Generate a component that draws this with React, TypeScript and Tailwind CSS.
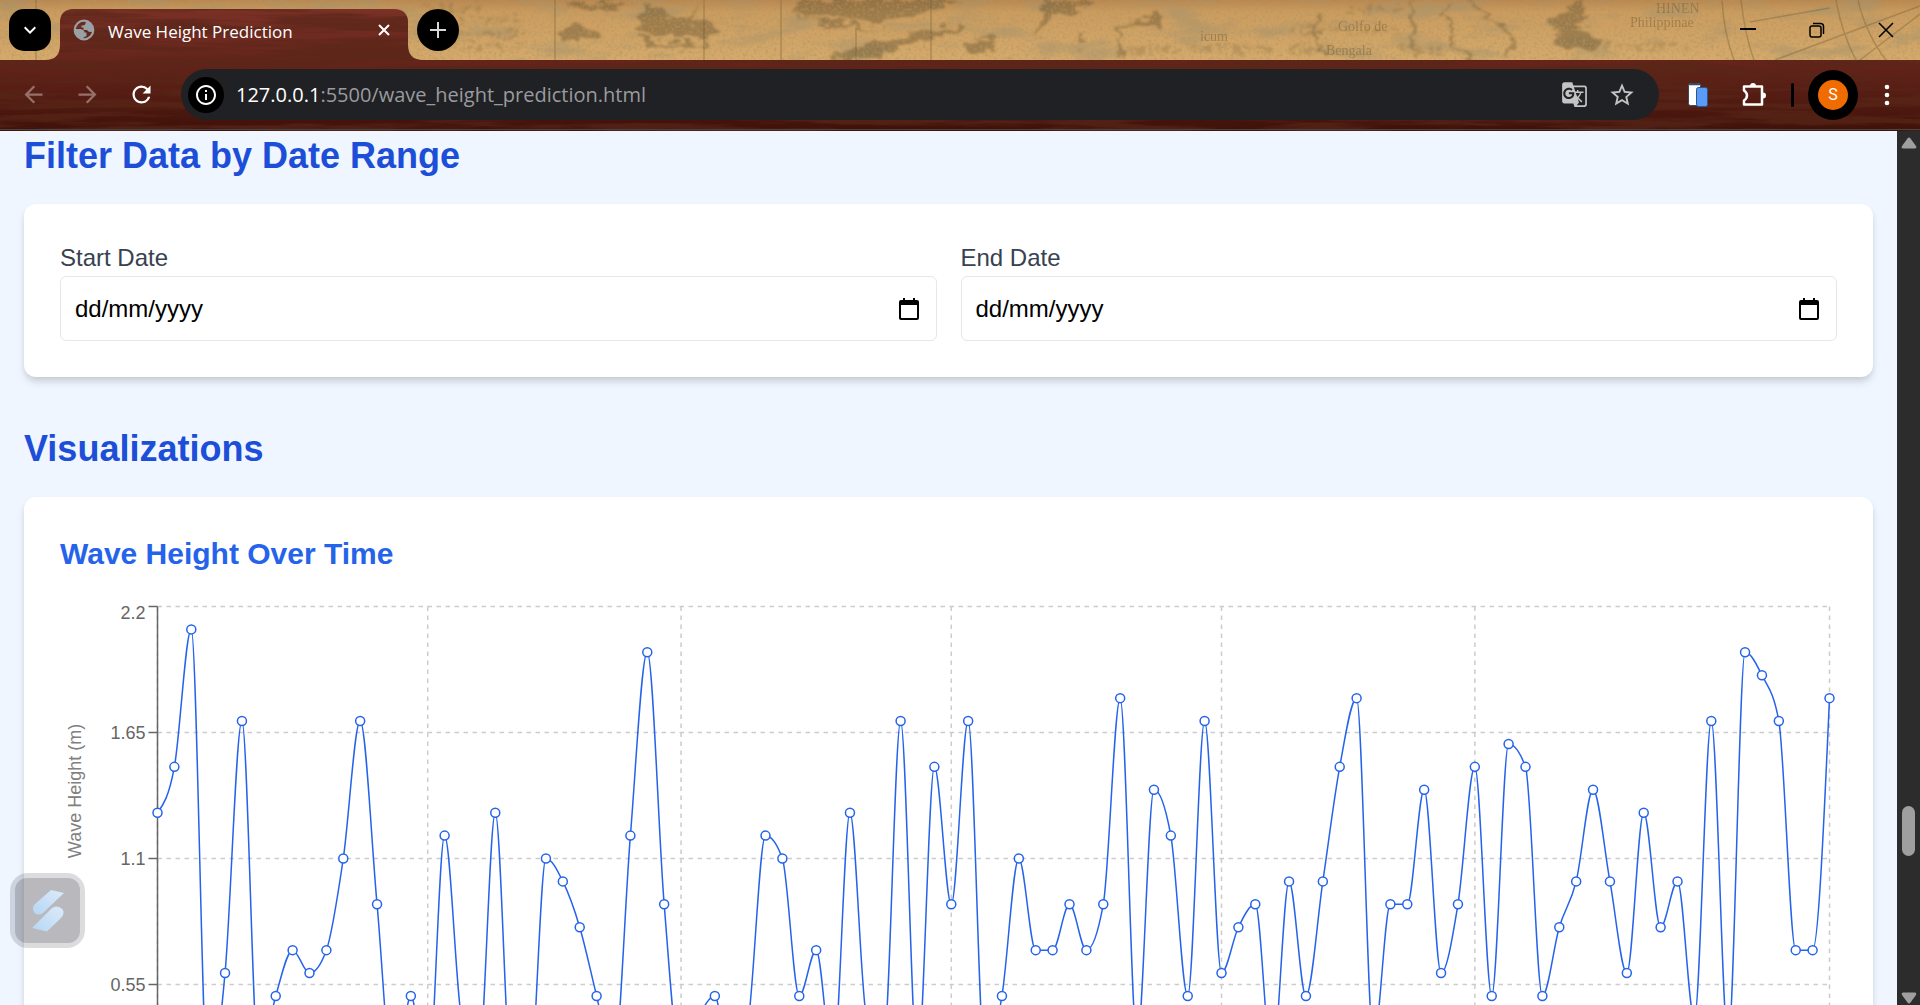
import { useLayoutEffect, useRef, useState } from "react";
import type { ReactNode } from "react";
import {
  MdArrowBack,
  MdArrowForward,
  MdGTranslate,
  MdInfoOutline,
  MdKeyboardArrowDown,
  MdRefresh,
  MdStarBorder,
} from "react-icons/md";

const WAVE_HEIGHTS = [
  1.3, 1.5, 2.1, 0.1, 0.6, 1.7, 0.2, 0.5, 0.7, 0.6, 0.7, 1.1, 1.7, 0.9, 0.1, 0.5, 0.1, 1.2, 0.4, 0.2,
  1.3, 0.1, 0.1, 1.1, 1.0, 0.8, 0.5, 0.2, 1.2, 2.0, 0.9, 0.2, 0.4, 0.5, 0.1, 0.4, 1.2, 1.1, 0.5, 0.7,
  0.2, 1.3, 0.4, 0.3, 1.7, 0.2, 1.5, 0.9, 1.7, 0.2, 0.5, 1.1, 0.7, 0.7, 0.9, 0.7, 0.9, 1.8, 0.3, 1.4,
  1.2, 0.5, 1.7, 0.6, 0.8, 0.9, 0.2, 1.0, 0.5, 1.0, 1.5, 1.8, 0.3, 0.9, 0.9, 1.4, 0.6, 0.9, 1.5, 0.5,
  1.6, 1.5, 0.5, 0.8, 1.0, 1.4, 1.0, 0.6, 1.3, 0.8, 1.0, 0.4, 1.7, 0.3, 2.0, 1.9, 1.7, 0.7, 0.7, 1.8,
];
const X_TICKS = [0, 16, 31, 47, 63, 78, 99];
const Y_TICKS = [0, 0.55, 1.1, 1.65, 2.2];

/** Monotone cubic path through the points, after Steffen. */
function monotonePath(pts: { x: number; y: number }[]) {
  const n = pts.length;
  const h = pts.slice(1).map((p, i) => p.x - pts[i].x);
  const s = pts.slice(1).map((p, i) => (p.y - pts[i].y) / h[i]);
  const m: number[] = new Array(n).fill(0);
  for (let i = 1; i < n - 1; i++) {
    const p = (s[i - 1] * h[i] + s[i] * h[i - 1]) / (h[i - 1] + h[i]);
    m[i] =
      (Math.sign(s[i - 1]) + Math.sign(s[i])) *
        Math.min(Math.abs(s[i - 1]), Math.abs(s[i]), 0.5 * Math.abs(p)) || 0;
  }
  m[0] = (3 * s[0] - m[1]) / 2;
  m[n - 1] = (3 * s[n - 2] - m[n - 2]) / 2;
  let d = `M${pts[0].x},${pts[0].y}`;
  for (let i = 0; i < n - 1; i++) {
    const k = h[i] / 3;
    d += `C${pts[i].x + k},${pts[i].y + k * m[i]},${pts[i + 1].x - k},${pts[i + 1].y - k * m[i + 1]},${pts[i + 1].x},${pts[i + 1].y}`;
  }
  return d;
}

function WaveChart() {
  const box = useRef<HTMLDivElement>(null);
  const [width, setWidth] = useState(1777);

  useLayoutEffect(() => {
    const el = box.current;
    if (!el) return;
    const measure = () => setWidth(el.clientWidth);
    measure();
    const observer = new ResizeObserver(measure);
    observer.observe(el);
    return () => observer.disconnect();
  }, []);

  // The drawing works in units of 1.5 screen pixels.
  const w = width / 1.5;
  const left = 65;
  const right = w - 5;
  const top = 5;
  const bottom = 341;
  const x = (i: number) => left + ((right - left) * i) / (WAVE_HEIGHTS.length - 1);
  const y = (v: number) => bottom - ((bottom - top) * v) / 2.2;
  const points = WAVE_HEIGHTS.map((v, i) => ({ x: x(i), y: y(v) }));

  return (
    <div ref={box} className="h-[600px] w-full">
      <svg
        viewBox={`0 0 ${w} 400`}
        className="block h-full w-full overflow-visible"
        role="img"
        aria-label="Wave Height Over Time"
      >
        <g stroke="#ccc" strokeDasharray="3 3">
          {Y_TICKS.map((v) => (
            <line key={v} x1={left} x2={right} y1={y(v)} y2={y(v)} />
          ))}
          {X_TICKS.map((i) => (
            <line key={i} x1={x(i)} x2={x(i)} y1={top} y2={bottom} />
          ))}
        </g>
        <g stroke="#666">
          <line x1={left} x2={left} y1={top} y2={bottom} />
          {Y_TICKS.map((v) => (
            <line key={v} x1={left - 6} x2={left} y1={y(v)} y2={y(v)} />
          ))}
        </g>
        <g fill="#666" fontSize="12" textAnchor="end">
          {Y_TICKS.map((v) => (
            <text key={v} x={left - 8} y={Math.max(y(v), 9) + 4}>
              {v}
            </text>
          ))}
        </g>
        <text fill="#808080" fontSize="12" textAnchor="middle" transform="translate(14 128) rotate(-90)">
          Wave Height (m)
        </text>
        <path d={monotonePath(points)} fill="none" stroke="#2563eb" />
        <g fill="#fff" stroke="#2563eb">
          {points.map((p, i) => (
            <circle key={i} cx={p.x} cy={p.y} r="3" />
          ))}
        </g>
      </svg>
    </div>
  );
}

/** Theme artwork: an old map behind the tabs, dark wood behind the toolbar. */
function ThemeArt() {
  return (
    <svg className="absolute inset-0 h-full w-full" aria-hidden="true">
      <defs>
        <linearGradient id="paper" x1="0" y1="0" x2="0" y2="1">
          <stop offset="0" stopColor="#b98750" />
          <stop offset="0.2" stopColor="#cb9c5f" />
          <stop offset="1" stopColor="#d5aa6c" />
        </linearGradient>
        <linearGradient id="wood" gradientUnits="userSpaceOnUse" x1="0" y1="9" x2="0" y2="131">
          <stop offset="0" stopColor="#7a3126" />
          <stop offset="0.42" stopColor="#65251b" />
          <stop offset="0.75" stopColor="#521b12" />
          <stop offset="1" stopColor="#3d1109" />
        </linearGradient>
        <filter id="grain" x="0" y="0" width="100%" height="100%">
          <feTurbulence type="fractalNoise" baseFrequency="0.007 0.12" numOctaves="5" seed="21" />
          <feColorMatrix values="0 0 0 0 0.1  0 0 0 0 0.02  0 0 0 0 0.01  5 0 0 0 -2" />
        </filter>
        <filter id="stain" x="0" y="0" width="100%" height="100%">
          <feTurbulence type="fractalNoise" baseFrequency="0.018 0.05" numOctaves="5" seed="11" />
          <feColorMatrix values="0 0 0 0 0.38  0 0 0 0 0.29  0 0 0 0 0.15  4 0 0 0 -2" />
        </filter>
        <filter id="speck" x="0" y="0" width="100%" height="100%">
          <feTurbulence type="fractalNoise" baseFrequency="0.35" numOctaves="3" seed="3" />
          <feColorMatrix values="0 0 0 0 0.45  0 0 0 0 0.3  0 0 0 0 0.12  2.2 0 0 0 -1" />
        </filter>
        <filter id="ink" x="-2%" y="-10%" width="104%" height="120%">
          <feTurbulence type="fractalNoise" baseFrequency="0.06 0.12" numOctaves="4" seed="4" result="n" />
          <feDisplacementMap in="SourceGraphic" in2="n" scale="20" xChannelSelector="R" yChannelSelector="G" />
          <feGaussianBlur stdDeviation="0.9" />
        </filter>
      </defs>
      <rect width="100%" height="60" fill="url(#paper)" />
      <rect width="100%" height="60" filter="url(#stain)" opacity="0.5" />
      <g fill="none" stroke="#7a6238" strokeWidth="1.5" opacity="0.45">
        <path d="M36 0V60M555 0V60M704 0V60M781 0V60M856 28V60M931 0V60M1722 0Q1724 34 1734 60M1741 0Q1745 36 1754 60M1775 60L1920 6M1836 0Q1842 34 1856 60M1858 0Q1866 34 1886 60M1860 60L1920 14M1750 22L1830 8" />
      </g>
      <svg width="100%" height="60">
        <g fill="#6f5a34" opacity="0.5" filter="url(#ink)">
          <path d="M642 4Q656 6 666 14Q680 22 690 18L700 4L692 22Q712 22 722 30Q716 38 690 38Q664 42 640 30Z" />
          <path d="M640 36Q672 48 704 42L702 46Q668 52 640 42Z" />
          <path d="M800 0H960L930 12Q880 24 846 20Q820 12 790 12Z" />
          <path d="M790 14Q840 22 868 28L894 28Q850 32 820 24Z" />
          <path d="M828 56Q880 46 900 34Q930 26 966 26Q950 36 916 42Q890 50 878 60H830Z" />
          <path d="M1044 0H1092Q1086 10 1060 12L1048 20Q1040 34 1034 34Q1044 16 1044 0Z" />
          <path d="M1082 30L1088 42L1080 48L1076 44Z" />
          <path d="M966 44Q980 36 998 44L994 52Q976 52 966 50Z" />
          <path d="M1126 24Q1150 18 1160 10Q1164 24 1150 28Q1136 30 1126 24Z" />
          <path d="M1552 16Q1570 8 1574 0H1584Q1586 16 1578 26Q1588 34 1604 40Q1596 50 1580 46Q1566 54 1558 44Q1550 40 1560 32Q1546 28 1552 16Z" />
          <path d="M584 2L560 6L600 12L640 2ZM560 30Q590 22 600 34Q580 42 560 38Z" />
          <path
            d="M430 20H520M440 34H530M450 46H524M1290 30H1400M1290 48H1330M1400 50H1440M1590 46H1690M1120 50H1180M1190 48H1270M1350 10H1400M420 8H480"
            stroke="#6f5a34"
            strokeWidth="5"
            strokeDasharray="5 4 3 3 8 5"
            opacity="0.5"
          />
          <path
            d="M1452 0Q1440 10 1448 20Q1458 30 1452 40Q1462 50 1470 60M1468 0Q1482 14 1500 24Q1520 36 1512 50Q1506 56 1508 60M1412 0Q1404 14 1416 28Q1408 44 1418 58M1130 18Q1114 26 1120 44Q1124 54 1118 60M1320 14Q1310 30 1322 56"
            fill="none"
            stroke="#6f5a34"
            strokeWidth="3"
          />
        </g>
      </svg>
      <g fill="#6f5a34" opacity="0.5" fontFamily="Liberation Serif, serif" fontSize="14">
        <text x="1200" y="41">icum</text>
        <text x="1338" y="31">Golfo de</text>
        <text x="1326" y="55">Bengala</text>
        <text x="1656" y="13">HINEN</text>
        <text x="1630" y="27">Philippinae</text>
      </g>
      <rect width="100%" height="60" filter="url(#speck)" opacity="0.7" />
      <path
        d="M0 60H45Q60 60 60 45V23Q60 9 74 9H394Q408 9 408 23V45Q408 60 423 60H8000V131H0Z"
        fill="url(#wood)"
      />
      <clipPath id="woodClip">
        <path d="M0 60H45Q60 60 60 45V23Q60 9 74 9H394Q408 9 408 23V45Q408 60 423 60H8000V131H0Z" />
      </clipPath>
      <g clipPath="url(#woodClip)">
        <rect width="100%" height="131" filter="url(#grain)" opacity="0.7" />
      </g>
      <rect y="129" width="100%" height="1" fill="#4a4442" />
    </svg>
  );
}

function ToolButton({ label, children }: { label: string; children: ReactNode }) {
  return (
    <button type="button" aria-label={label} className="grid h-[51px] w-[54px] shrink-0 place-items-center text-white">
      {children}
    </button>
  );
}

function WindowButton({ label, children }: { label: string; children: ReactNode }) {
  return (
    <button type="button" aria-label={label} className="grid h-[60px] w-[69px] place-items-center">
      <svg viewBox="0 0 16 16" className="size-4" fill="none" stroke="#000" strokeWidth="1.5">
        {children}
      </svg>
    </button>
  );
}

function BrowserChrome() {
  return (
    <header className="relative shrink-0 font-['Open_Sans',sans-serif]">
      <ThemeArt />
      <div className="relative flex h-[60px] items-start">
        <button
          type="button"
          aria-label="Search tabs"
          className="mt-[9px] ml-[9px] grid size-[42px] place-items-center rounded-[15px] bg-black text-white"
        >
          <MdKeyboardArrowDown className="size-6" />
        </button>
        <div className="mt-[9px] ml-[9px] flex h-[51px] w-[348px] items-start px-3">
          <svg viewBox="0 0 24 24" className="mt-[9px] size-6" fill="#9aa0a6" aria-hidden="true">
            <circle cx="12" cy="12" r="9.3" fill="none" stroke="#9aa0a6" strokeWidth="2.200" />
            <path d="M14 2.500Q21 5 21.500 12L19.500 14Q16 14.500 15 12H11.500V9.500H9.500V7.500Q13 7.500 13.500 5.500Z" />
            <path d="M2.500 11H8.500Q12.500 11.500 12.500 14.500H14.500V18L11.500 19.500V21.500Q3.500 20.500 2.500 11Z" />
          </svg>
          <span className="ml-3 grow pt-[11px] text-[17px] leading-6 text-white">Wave Height Prediction</span>
          <button type="button" aria-label="Close tab" className="mt-[9px] grid size-6 place-items-center">
            <svg viewBox="0 0 12 12" className="size-3" stroke="#fff" strokeWidth="2">
              <path d="M1 1L11 11M11 1L1 11" />
            </svg>
          </button>
        </div>
        <button
          type="button"
          aria-label="New tab"
          className="mt-[9px] ml-[9px] grid size-[42px] place-items-center rounded-full bg-black"
        >
          <svg viewBox="0 0 16 16" className="size-4" stroke="#d8d8d8" strokeWidth="2">
            <path d="M8 0V16M0 8H16" />
          </svg>
        </button>
        <div className="ml-auto flex">
          <WindowButton label="Minimize">
            <path d="M0 7H16" strokeWidth="2" />
          </WindowButton>
          <WindowButton label="Restore">
            <rect x="1" y="4" width="11" height="11" rx="2" />
            <path d="M4 1.5H11.5Q14.5 1.5 14.5 4.5V12" />
          </WindowButton>
          <WindowButton label="Close">
            <path d="M1 1L15 15M15 1L1 15" />
          </WindowButton>
        </div>
      </div>
      <div className="relative flex h-[71px] items-center pr-[6px] pb-[2px] pl-[6px]">
        <ToolButton label="Back">
          <MdArrowBack className="size-[27px] text-[#96706a]" />
        </ToolButton>
        <ToolButton label="Forward">
          <MdArrowForward className="size-[27px] text-[#96706a]" />
        </ToolButton>
        <ToolButton label="Reload">
          <MdRefresh className="size-[27px]" />
        </ToolButton>
        <div className="ml-[13px] flex h-[51px] min-w-0 flex-1 items-center rounded-full bg-[#202124] pr-[13px] pl-[7px]">
          <button
            type="button"
            aria-label="View site information"
            className="grid size-9 shrink-0 place-items-center rounded-full bg-black text-white"
          >
            <MdInfoOutline className="size-6" />
          </button>
          <p className="ml-3 min-w-0 grow truncate text-[20px] leading-7 text-[#9a9b9e]">
            <span className="text-white">127.0.0.1</span>:5500/wave_height_prediction.html
          </p>
          <button type="button" aria-label="Translate this page" className="grid size-12 place-items-center text-[#c4c4c4]">
            <MdGTranslate className="size-[27px]" />
          </button>
          <button type="button" aria-label="Bookmark this tab" className="grid size-12 place-items-center text-[#c4c4c4]">
            <MdStarBorder className="size-7" />
          </button>
        </div>
        <div className="ml-3">
          <ToolButton label="Page extension">
            <svg viewBox="0 0 20 24" className="h-6 w-5">
              <rect x="0.5" y="0.5" width="12" height="22" rx="2" fill="#fff" stroke="#3b4a63" />
              <path d="M1 1.5H13" stroke="#3b4a63" strokeWidth="1.5" />
              <rect x="8.5" y="4.500" width="11" height="19" rx="2" fill="#5a9bf8" stroke="#2c5592" />
            </svg>
          </ToolButton>
        </div>
        <div className="ml-[2px]">
          <ToolButton label="Extensions">
            <svg viewBox="0 0 26 26" className="size-[26px]">
              <path
                d="M3 4.500H21V22.500H3V18.500Q6 16.500 6 13.500Q6 10.500 3 8.500Z"
                fill="none"
                stroke="#fff"
                strokeWidth="2.500"
                strokeLinejoin="round"
              />
              <path d="M9 4A3 3 0 0 1 15 4ZM22 10.500A3 3 0 0 1 22 16.500Z" fill="#fff" />
            </svg>
          </ToolButton>
        </div>
        <span className="ml-[10px] h-6 w-[3px] rounded-full bg-black" />
        <button
          type="button"
          aria-label="Profile"
          className="ml-[14px] grid size-[50px] shrink-0 place-items-center rounded-full bg-black"
        >
          <span className="grid size-[30px] place-items-center rounded-full bg-[#f06c00] font-[Roboto,sans-serif] text-base text-white">
            S
          </span>
        </button>
        <div className="ml-[2px]">
          <ToolButton label="Menu">
            <svg viewBox="0 0 6 22" className="h-[22px] w-[6px]" fill="#fff">
              <circle cx="3" cy="3" r="2.300" />
              <circle cx="3" cy="11" r="2.300" />
              <circle cx="3" cy="19" r="2.300" />
            </svg>
          </ToolButton>
        </div>
      </div>
    </header>
  );
}

function DateField({ id, label }: { id: string; label: string }) {
  return (
    <div>
      <label htmlFor={id} className="block text-2xl leading-9 text-[#374151]">
        {label}
      </label>
      <div className="flex h-[65px] items-center rounded-md border border-[#e5e7eb] pr-[15px] pl-[14px]">
        <input
          id={id}
          type="text"
          placeholder="dd/mm/yyyy"
          className="min-w-0 flex-1 bg-transparent text-2xl text-black outline-none placeholder:text-black"
        />
        <button type="button" aria-label={`Pick ${label.toLowerCase()}`} className="grid size-6 place-items-center">
          <svg viewBox="0 0 20 22" className="h-[22px] w-5">
            <path
              d="M4 0H6V2H14V0H16V2H18Q20 2 20 4V20Q20 22 18 22H2Q0 22 0 20V4Q0 2 2 2H4ZM2 7V20H18V7Z"
              fill="#000"
            />
          </svg>
        </button>
      </div>
    </div>
  );
}

const CARD = "rounded-xl bg-white p-9 shadow-[0_6px_9px_-1px_rgba(0,0,0,0.12),0_3px_6px_-1px_rgba(0,0,0,0.08)]";
const HEADING = "mb-6 text-4xl leading-[48px] font-bold text-[#1d4ed8]";

export default function App() {
  return (
    <div className="relative flex h-screen flex-col overflow-hidden font-['Liberation_Sans',Arial,sans-serif]">
      <BrowserChrome />
      <div className="flex min-h-0 flex-1">
        <main className="min-w-0 flex-1 overflow-hidden bg-[#eff6ff] px-6 pt-px">
          <section className="mb-12">
            <h2 className={HEADING}>Filter Data by Date Range</h2>
            <div className={CARD}>
              <div className="grid grid-cols-2 gap-6">
                <DateField id="start-date" label="Start Date" />
                <DateField id="end-date" label="End Date" />
              </div>
            </div>
          </section>
          <section>
            <h2 className={HEADING}>Visualizations</h2>
            <div className={CARD}>
              <h3 className="mb-6 text-3xl leading-[42px] font-bold text-[#2563eb]">Wave Height Over Time</h3>
              <WaveChart />
            </div>
          </section>
        </main>
        <div className="relative flex w-[23px] shrink-0 flex-col items-center justify-between bg-[#2c2c2c] pt-[6px] pb-px">
          <svg viewBox="0 0 16 12" className="h-3 w-4" fill="#9f9f9f">
            <path d="M6.500 1.500Q8 -0.500 9.500 1.500L15 9Q16 11.500 13.500 11.500H2.500Q0 11.500 1 9Z" />
          </svg>
          <div className="absolute top-[77.2%] h-[50px] w-[13px] rounded-full bg-[#9f9f9f]" />
          <svg viewBox="0 0 16 12" className="h-3 w-4" fill="#9f9f9f">
            <path d="M6.500 10.500Q8 12.500 9.500 10.500L15 3Q16 0.500 13.500 0.500H2.500Q0 0.500 1 3Z" />
          </svg>
        </div>
      </div>
      <button
        type="button"
        aria-label="Open assistant"
        className="absolute bottom-[57px] left-[10px] grid size-[75px] place-items-center rounded-[18px] bg-[rgba(30,30,50,0.155)]"
      >
        <span className="grid size-[65px] place-items-center rounded-xl bg-[rgba(30,30,40,0.19)]">
          <svg viewBox="0 0 32 42" className="h-[42px] w-8">
            <defs>
              <linearGradient id="bolt" x1="0" y1="1" x2="1" y2="0">
                <stop offset="0" stopColor="#b5d6f4" />
                <stop offset="1" stopColor="#dcebfa" />
              </linearGradient>
            </defs>
            <path d="M19 0L32 3L11 23Q8 25.500 4 24Q1 22 1 18Q1 15.500 3 14Z" fill="url(#bolt)" />
            <path d="M0 38L20 18Q23 15.500 27 17Q32 19 31.500 23Q31.500 26 28 29L15 41.500Z" fill="url(#bolt)" />
          </svg>
        </span>
      </button>
    </div>
  );
}
